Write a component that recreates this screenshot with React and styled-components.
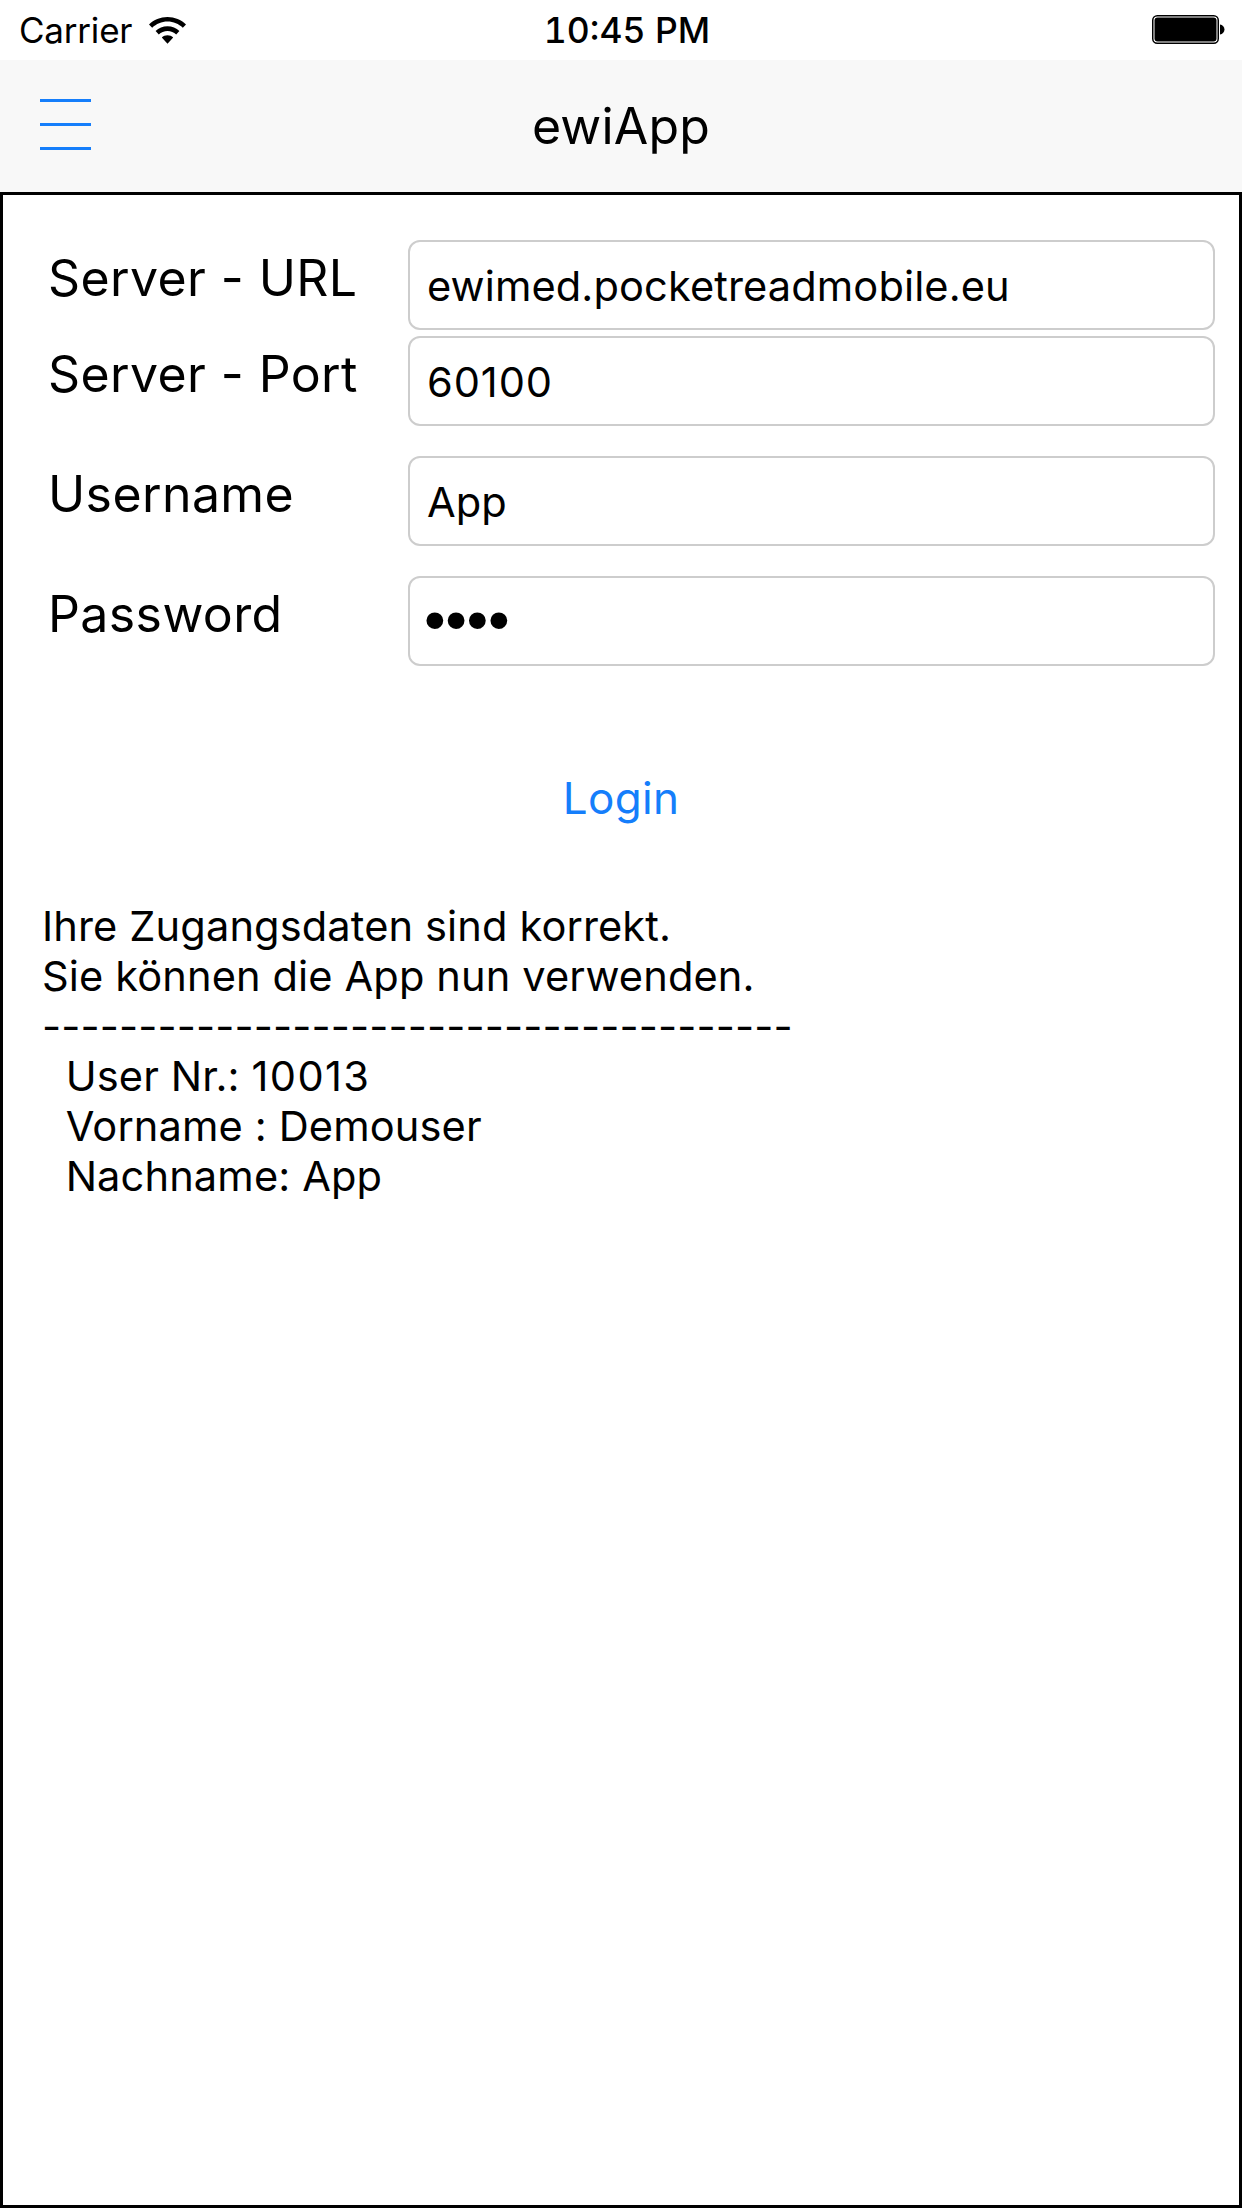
import React from "react";
import styled, { createGlobalStyle } from "styled-components";

const Global = createGlobalStyle`
  html, body { margin: 0; padding: 0; background: #fff; }
  body {
    font-family: Inter, "Liberation Sans", sans-serif;
    color: #000;
  }
`;

const Page = styled.div`
  width: 1242px;
  height: 2208px;
  display: flex;
  flex-direction: column;
  overflow: hidden;
`;

const StatusBar = styled.div`
  height: 60px;
  flex: none;
  display: grid;
  grid-template-columns: 1fr auto 1fr;
  align-items: center;
  padding: 0 17px 0 19px;
  background: #fff;
`;

const StatusLeft = styled.div`
  display: flex;
  align-items: center;
  gap: 17px;
  font-size: 35px;
  letter-spacing: -0.2px;
`;

const Clock = styled.div`
  margin-left: 10px;
  font-size: 35.5px;
  font-weight: 500;
  font-variant-numeric: tabular-nums;
`;

const StatusRight = styled.div`
  display: flex;
  justify-content: flex-end;
`;

const NavBar = styled.header`
  height: 132px;
  flex: none;
  position: relative;
  display: flex;
  align-items: center;
  justify-content: center;
  background: #f8f8f8;
`;

const MenuButton = styled.div`
  position: absolute;
  left: 40px;
  top: 39px;
  width: 51px;
  display: flex;
  flex-direction: column;
  gap: 21px;
`;

const MenuLine = styled.span`
  display: block;
  height: 3px;
  background: #157efb;
`;

const NavTitle = styled.h1`
  margin: 0;
  font-size: 50px;
  font-weight: 400;
  letter-spacing: 0.2px;
`;

const Main = styled.main`
  flex: 1;
  box-sizing: border-box;
  border: 3px solid #000;
  padding: 45px 24px 0 45px;
`;

const Row = styled.div`
  display: flex;
  align-items: flex-start;
  margin-top: ${(p) => p.$gap}px;
`;

const Label = styled.label`
  width: 360px;
  flex: none;
  font-size: 50px;
  line-height: 58px;
  letter-spacing: 0.4px;
  margin-top: 9px;
`;

const Field = styled.input`
  flex: 1;
  min-width: 0;
  box-sizing: border-box;
  height: 90px;
  padding: 2px 17px 0;
  border: 2px solid #cdcdcd;
  border-radius: 12px;
  background: #fff;
  outline: none;
  color: #000;
  font-family: Inter, "Liberation Sans", sans-serif;
  font-size: 41.6px;
  letter-spacing: ${(p) => (p.$digits ? "0.9px" : "0.1px")};
`;

const PasswordField = styled(Field)`
  padding: 0 14px 3px;
  font-family: "Liberation Sans", sans-serif;
  font-size: 62px;
  letter-spacing: -0.4px;
`;

const LoginButton = styled.div`
  margin-top: 104px;
  margin-left: -45px;
  margin-right: -24px;
  text-align: center;
  color: #157efb;
  font-size: 44px;
  line-height: 56px;
  letter-spacing: 0.3px;
`;

const Message = styled.pre`
  margin: 75px 0 0 -6px;
  font-family: Inter, "Liberation Sans", sans-serif;
  font-size: 41.6px;
  line-height: 50px;
  letter-spacing: 0.12px;
`;

const Digits = styled.span`
  letter-spacing: 1.4px;
`;

const Wifi = () => (
  <svg width="37" height="27" viewBox="0 0 37 27">
    <path
      fill="#000"
      d="M18.5 0C11.3 0 4.8 2.8 0 7.4l3.2 3.3C7.2 6.900 12.600 4.500 18.500 4.500s11.300 2.400 15.300 6.200L37 7.400C32.200 2.800 25.700 0 18.500 0zM18.500 9.300c-4.600 0-8.800 1.800-11.900 4.800l3.200 3.300c2.300-2.200 5.400-3.500 8.700-3.500s6.400 1.300 8.700 3.500l3.200-3.300c-3.100-3-7.300-4.800-11.900-4.800zM18.500 18.200c-2.200 0-4.200 0.900-5.700 2.300L18.500 26.700l5.700-6.200c-1.500-1.400-3.500-2.300-5.700-2.300z"
    />
  </svg>
);

const Battery = () => (
  <svg width="73" height="30" viewBox="0 0 73 30">
    <rect x="0.750" y="0.750" width="65.500" height="27.500" rx="4.500" fill="#fff" stroke="#000" strokeWidth="1.500" />
    <rect x="2.500" y="2.500" width="62" height="24" rx="3" fill="#000" />
    <path d="M68 9.500c2.600 0.400 4.500 2.500 4.500 5s-1.900 4.600-4.500 5z" fill="#000" />
  </svg>
);

const fields = [
  { label: "Server - URL", value: "ewimed.pocketreadmobile.eu", gap: 0 },
  { label: "Server - Port", value: "60100", gap: 6, digits: true },
  { label: "Username", value: "App", gap: 30 },
];

export default function App() {
  return (
    <Page>
      <Global />
      <StatusBar>
        <StatusLeft>
          Carrier
          <Wifi />
        </StatusLeft>
        <Clock>10:45 PM</Clock>
        <StatusRight>
          <Battery />
        </StatusRight>
      </StatusBar>
      <NavBar>
        <MenuButton>
          <MenuLine />
          <MenuLine />
          <MenuLine />
        </MenuButton>
        <NavTitle>ewiApp</NavTitle>
      </NavBar>
      <Main>
        {fields.map((f) => (
          <Row key={f.label} $gap={f.gap}>
            <Label>{f.label}</Label>
            <Field readOnly type="text" value={f.value} $digits={f.digits} />
          </Row>
        ))}
        <Row $gap={30}>
          <Label>Password</Label>
          <PasswordField readOnly type="password" value="abcd" />
        </Row>
        <LoginButton>Login</LoginButton>
        <Message>
          {"Ihre Zugangsdaten sind korrekt.\nSie können die App nun verwenden.\n"}
          {"-".repeat(39)}
          {"\n  User Nr.: "}
          <Digits>10013</Digits>
          {"\n  Vorname : Demouser\n  Nachname: App"}
        </Message>
      </Main>
    </Page>
  );
}
